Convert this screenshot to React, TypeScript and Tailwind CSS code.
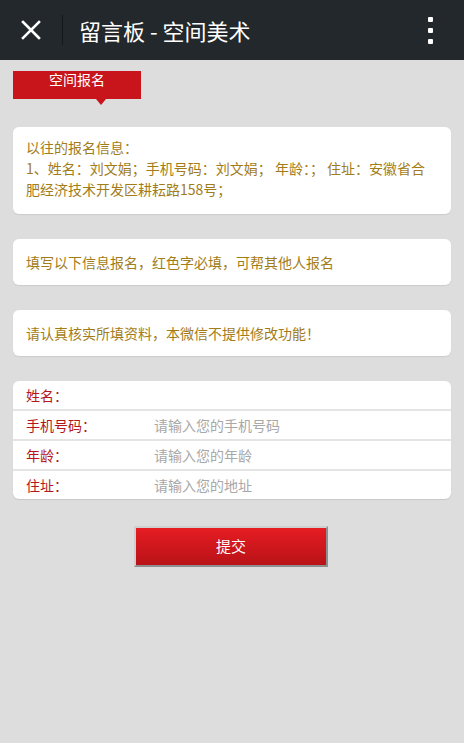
import React from "react";

const font = { fontFamily: '"Noto Sans CJK SC", "Noto Sans", Roboto, sans-serif' };

export default function App() {
  return (
    <div className="w-[464px] h-[743px] bg-[#dddddd] flex flex-col" style={font}>
      <div className="h-[60px] bg-[#22282b] flex items-center shrink-0">
        <div className="w-[62px] flex justify-center items-center">
          <svg width="20" height="20" viewBox="0 0 20 20">
            <path d="M2 2 L18 18 M18 2 L2 18" stroke="#fff" strokeWidth="2.6" strokeLinecap="square" />
          </svg>
        </div>
        <div className="w-px h-[30px] bg-[#14181a]" />
        <div className="ml-[16px] text-white text-[22px] leading-none flex-1">留言板 - 空间美术</div>
        <div className="w-[40px] flex flex-col items-center gap-[6px] mr-[14px]">
          <div className="w-[5px] h-[5px] bg-white rounded-[1px]" />
          <div className="w-[5px] h-[5px] bg-white rounded-[1px]" />
          <div className="w-[5px] h-[5px] bg-white rounded-[1px]" />
        </div>
      </div>

      <div className="px-[13px] pt-[11px]">
        <div className="relative w-[128px] h-[28px] bg-[#c8151b] text-white text-[14px] leading-none flex justify-center pt-[1px]">
          空间报名
          <div className="absolute left-[83px] top-[28px] w-0 h-0 border-l-[5px] border-r-[5px] border-t-[6px] border-l-transparent border-r-transparent border-t-[#c8151b]" />
        </div>

        <div className="mt-[28px] bg-white rounded-[6px] shadow-[0_1px_1px_rgba(0,0,0,0.08)] px-[13px] pt-[10px] pb-[14px] text-[14px] leading-[21px] text-[#a27c17]">
          <div>以往的报名信息：</div>
          <div>1、姓名：刘文娟；手机号码：刘文娟； 年龄：； 住址：安徽省合肥经济技术开发区耕耘路158号；</div>
        </div>

        <div className="mt-[25px] bg-white rounded-[6px] shadow-[0_1px_1px_rgba(0,0,0,0.08)] px-[13px] h-[46px] flex items-center text-[14px] text-[#a27c17]">
          填写以下信息报名，红色字必填，可帮其他人报名
        </div>

        <div className="mt-[25px] bg-white rounded-[6px] shadow-[0_1px_1px_rgba(0,0,0,0.08)] px-[13px] h-[46px] flex items-center text-[14px] text-[#a27c17]">
          请认真核实所填资料，本微信不提供修改功能！
        </div>

        <div className="mt-[25px] bg-white rounded-[6px] shadow-[0_1px_1px_rgba(0,0,0,0.1)] text-[14px] overflow-hidden">
          {[
            ["姓名：", ""],
            ["手机号码：", "请输入您的手机号码"],
            ["年龄：", "请输入您的年龄"],
            ["住址：", "请输入您的地址"],
          ].map(([l, p], i) => (
            <div
              key={i}
              className={`flex items-center px-[13px] ${i > 0 ? "h-[30px] border-t-2 border-[#e4e4e4]" : "h-[28px]"}`}
            >
              <div className="w-[128px] text-[#b5161c]">{l}</div>
              <div className="text-[#a8a8a8]">{p}</div>
            </div>
          ))}
        </div>

        <div className="flex justify-center mt-[27px]">
          <div className="w-[194px] h-[41px] ml-[-2px] border-2 border-[#8e8e8e] border-t-[#cfcfcf] border-l-[#cfcfcf] bg-gradient-to-b from-[#e61d22] to-[#b81218] text-white text-[15px] flex items-center justify-center">
            提交
          </div>
        </div>
      </div>
    </div>
  );
}
